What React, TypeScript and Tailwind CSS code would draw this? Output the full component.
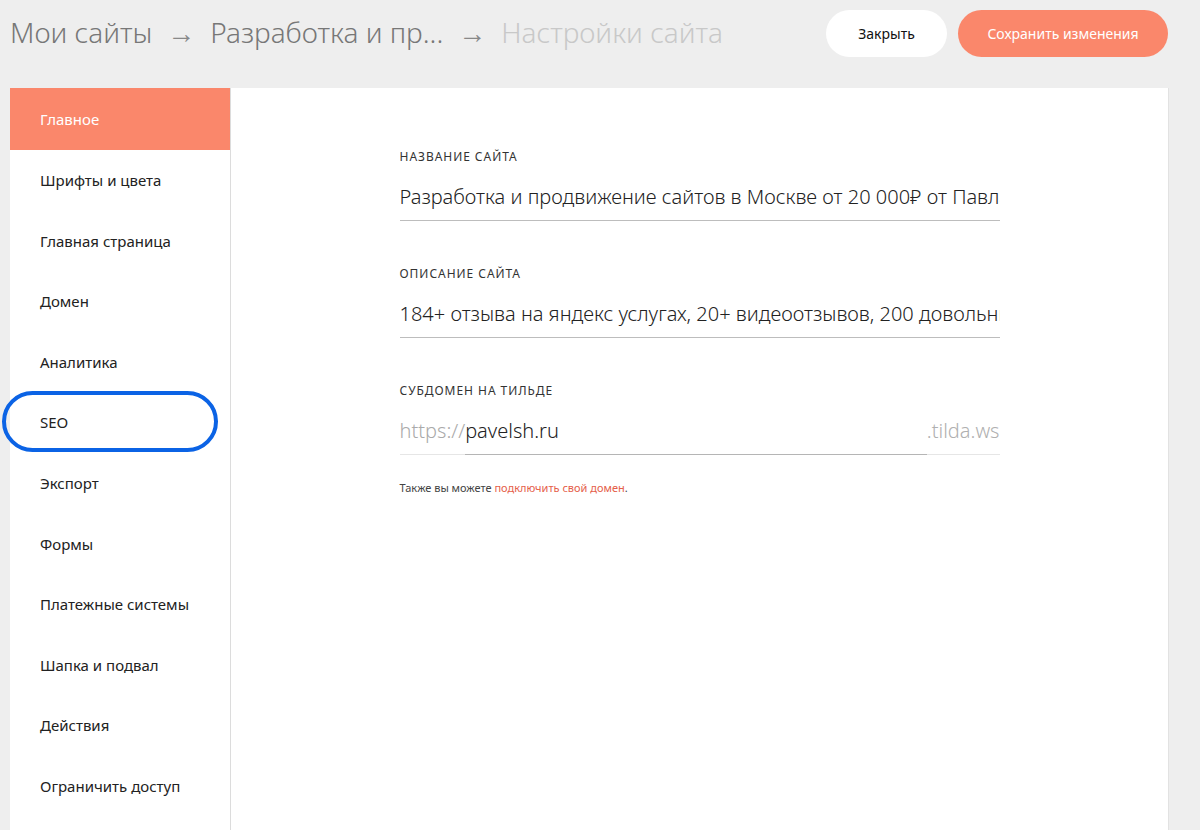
import { useState } from 'react'

const menu = [
    'Главное',
    'Шрифты и цвета',
    'Главная страница',
    'Домен',
    'Аналитика',
    'SEO',
    'Экспорт',
    'Формы',
    'Платежные системы',
    'Шапка и подвал',
    'Действия',
    'Ограничить доступ',
]

function Field({ label, value }: { label: string; value: string }) {
    return (
        <div className="mb-[46px]">
            <div className="text-[12px] uppercase tracking-[0.08em] text-[#333] leading-[14px]">{label}</div>
            <div className="mt-[20px] overflow-hidden whitespace-nowrap border-b border-[#bdbdbd] pb-[10px] text-[20px] font-light leading-[26px] text-[#222]">
                {value}
            </div>
        </div>
    )
}

export default function App() {
    const [active, setActive] = useState(0)

    return (
        <div className="flex min-h-[830px] flex-col bg-[#eeeeee] font-['Noto_Sans',sans-serif]">
            <header className="flex h-[88px] shrink-0 items-start justify-between pl-[10px] pr-[32px]">
                <div className="mt-[14px] flex items-center gap-[15px] text-[28px] font-light leading-[36px]">
                    <span className="text-[#777]">Мои сайты</span>
                    <span className="text-[#888]">→</span>
                    <span className="text-[#777]">Разработка и пр...</span>
                    <span className="text-[#888]">→</span>
                    <span className="text-[#c8c8c8]">Настройки сайта</span>
                </div>
                <div className="mt-[10px] flex gap-[11px]">
                    <button type="button" className="h-[47px] w-[121px] rounded-full bg-white text-[14px] text-[#111]">
                        Закрыть
                    </button>
                    <button type="button" className="h-[47px] w-[210px] rounded-full bg-[#fa876b] text-[14px] text-white">
                        Сохранить изменения
                    </button>
                </div>
            </header>

            <div className="flex flex-1 pl-[10px] pr-[32px]">
                <nav className="relative w-[221px] shrink-0 border-r border-[#dcdcdc] bg-white">
                    {menu.map((item, i) => (
                        <div
                            key={item}
                            onClick={() => setActive(i)}
                            className={
                                i === active
                                    ? 'flex h-[62px] cursor-pointer items-center bg-[#fa876b] pl-[30px] text-[15px] text-white'
                                    : 'flex h-[60.6px] cursor-pointer items-center pl-[30px] text-[15px] text-[#222]'
                            }
                        >
                            {item}
                        </div>
                    ))}
                    <div className="pointer-events-none absolute left-[-8px] top-[303px] h-[61px] w-[216px] rounded-full border-[4px] border-[#0b63e5]" />
                </nav>

                <main className="flex-1 bg-white pt-[62px] shadow-[1px_0_0_#e2e2e2]">
                    <div className="mx-auto w-[600px]">
                        <Field label="Название сайта" value="Разработка и продвижение сайтов в Москве от 20 000₽ от Павла Шевцова" />
                        <Field label="Описание сайта" value="184+ отзыва на яндекс услугах, 20+ видеоотзывов, 200 довольных клиентов" />

                        <div>
                            <div className="text-[12px] uppercase tracking-[0.08em] text-[#333] leading-[14px]">Субдомен на тильде</div>
                            <div className="mt-[20px] flex text-[20px] font-light leading-[26px]">
                                <span className="border-b border-[#e6e6e6] pb-[10px] text-[#aaa]">https://</span>
                                <span className="flex-1 border-b border-[#b5b5b5] pb-[10px] text-[#222]">pavelsh.ru</span>
                                <span className="border-b border-[#e6e6e6] pb-[10px] text-[#b0b0b0]">.tilda.ws</span>
                            </div>
                            <p className="mt-[25px] text-[11px] text-[#444]">
                                Также вы можете <span className="text-[#e5604a]">подключить свой домен</span>.
                            </p>
                        </div>
                    </div>
                </main>
            </div>
        </div>
    )
}
